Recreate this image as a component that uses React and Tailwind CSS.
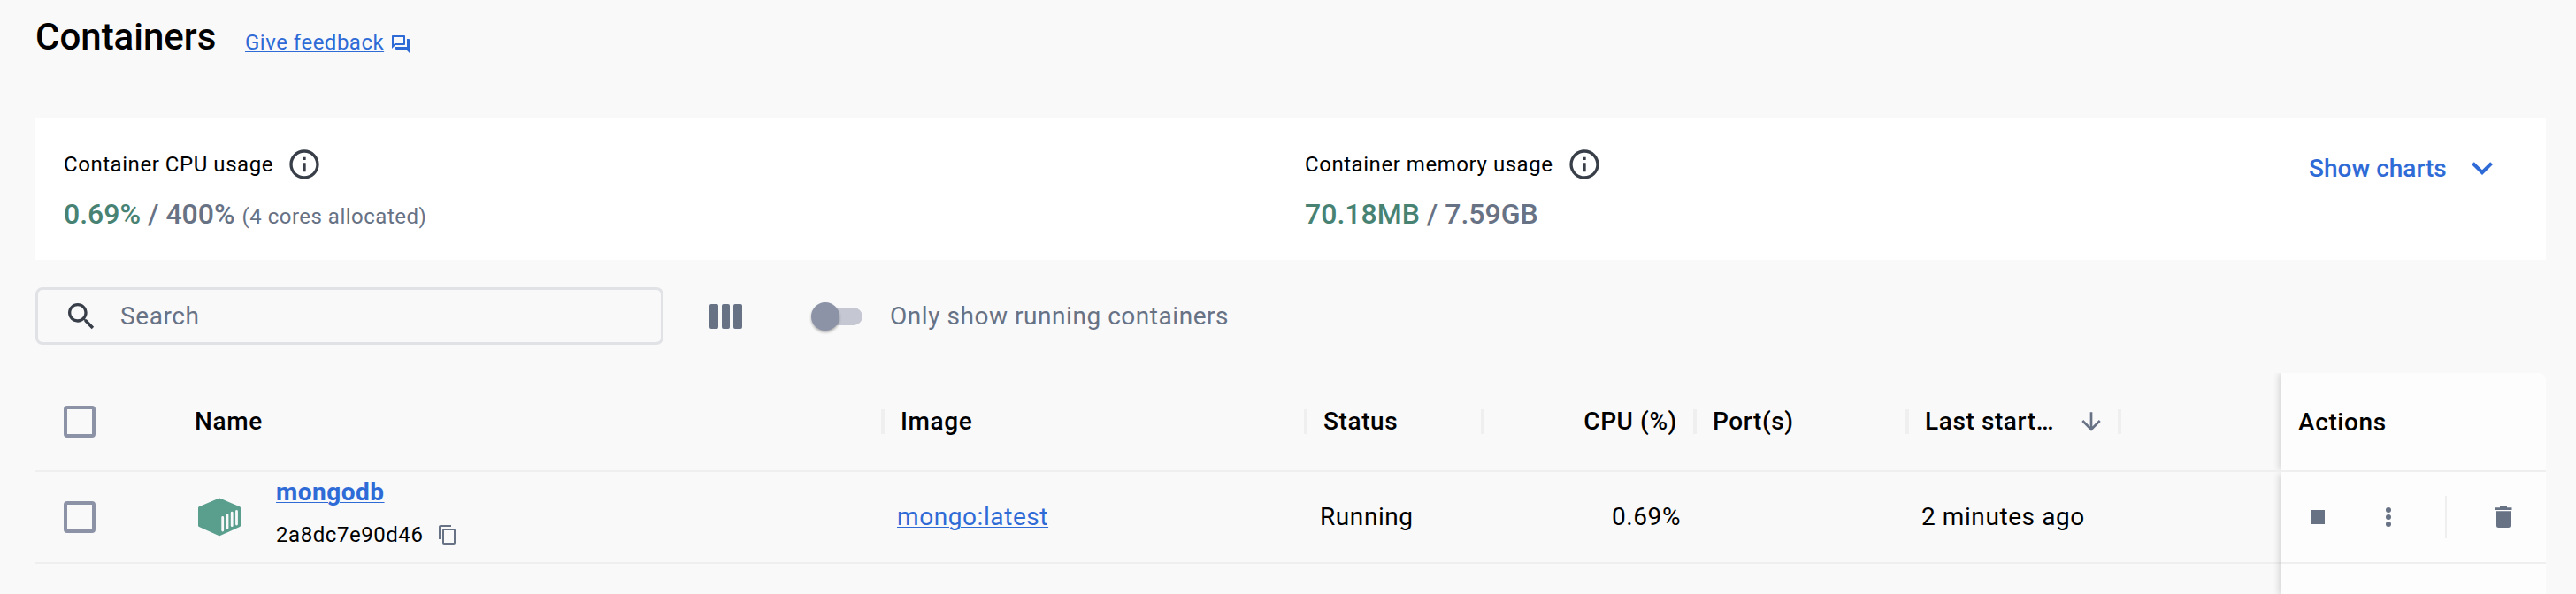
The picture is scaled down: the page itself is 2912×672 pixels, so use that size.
const Icon = ({ d, className }) => (
  <svg viewBox="0 0 24 24" fill="currentColor" className={className} aria-hidden="true">
    <path d={d} />
  </svg>
);

const paths = {
  forum:
    "M15 4v7H5.17L4 12.17V4h11m1-2H3c-.55 0-1 .45-1 1v14l4-4h10c.55 0 1-.45 1-1V3c0-.55-.45-1-1-1zm5 4h-2v9H6v2c0 .55.45 1 1 1h11l4 4V7c0-.55-.45-1-1-1z",
  info: "M11 7h2v2h-2zm0 4h2v6h-2zm1-9C6.48 2 2 6.48 2 12s4.48 10 10 10 10-4.48 10-10S17.52 2 12 2zm0 18c-4.41 0-8-3.59-8-8s3.59-8 8-8 8 3.59 8 8-3.59 8-8 8z",
  expand: "M16.59 8.59 12 13.17 7.41 8.59 6 10l6 6 6-6z",
  search:
    "M15.5 14h-.79l-.28-.27C15.41 12.59 16 11.11 16 9.5 16 5.91 13.09 3 9.5 3S3 5.91 3 9.5 5.91 16 9.5 16c1.61 0 3.09-.59 4.23-1.57l.27.28v.79l5 4.99L20.49 19l-4.99-5zm-6 0C7.01 14 5 11.99 5 9.5S7.01 5 9.5 5 14 7.01 14 9.5 11.99 14 9.5 14z",
  copy: "M16 1H4c-1.1 0-2 .9-2 2v14h2V3h12V1zm3 4H8c-1.1 0-2 .9-2 2v14c0 1.1.9 2 2 2h11c1.1 0 2-.9 2-2V7c0-1.1-.9-2-2-2zm0 16H8V7h11v14z",
  arrow: "m20 12-1.41-1.41L13 16.17V4h-2v12.17l-5.58-5.59L4 12l8 8 8-8z",
};

const Checkbox = () => (
  <span className="size-9 rounded-[4px] border-4 border-[#8c93a7]" role="checkbox" aria-checked="false" />
);

const Label = ({ children }) => (
  <div className="flex h-12 items-center gap-[15px]">
    <span className="text-[24px] leading-[36px] tracking-[0.55px]">{children}</span>
    <Icon d={paths.info} className="size-10 text-[#393f49]" />
  </div>
);

const HeadCell = ({ className, children }) => (
  <div className={`flex h-full shrink-0 items-center justify-between ${className}`}>
    {children}
    <span className="ml-auto h-7 w-1 shrink-0 bg-[#efeff0]" />
  </div>
);

const headText = "text-[28px] font-medium leading-[40px] tracking-[0.6px]";
const bodyText = "text-[28px] leading-[40px] tracking-[0.58px]";
const link = "text-[#2f6bd6] underline decoration-1 underline-offset-[2px]";

export default function App() {
  return (
    <main className="flex h-[672px] w-[2912px] flex-col overflow-hidden bg-[#f9f9fa] pl-10 font-['Roboto','Liberation_Sans',sans-serif] text-black">
      <header className="flex h-[134px] shrink-0 items-baseline pt-3">
        <h1 className="w-[237px] text-[42px] font-medium leading-[60px]">Containers</h1>
        <a className={`text-[24px] tracking-[0.5px] ${link}`}>Give feedback</a>
        <Icon d={paths.forum} className="ml-[7px] size-6 translate-y-[6px] text-[#2f6bd6]" />
      </header>

      <section className="flex h-40 w-[2838px] shrink-0 bg-white pl-8">
        <div className="w-[1403px] pt-7">
          <Label>Container CPU usage</Label>
          <p className="mt-[10px] flex items-baseline text-[32px] font-medium leading-[44px] text-[#677285]">
            <span className="text-[#478273]">0.69%</span>
            <span className="whitespace-pre"> / 400% </span>
            <span className="text-[24px] font-normal tracking-[0.5px]">(4 cores allocated)</span>
          </p>
        </div>
        <div className="w-[1135px] pt-7">
          <Label>Container memory usage</Label>
          <p className="mt-[10px] text-[32px] font-medium leading-[44px] text-[#677285]">
            <span className="text-[#478273]">70.18MB</span> / 7.59GB
          </p>
        </div>
        <div className="mt-8 flex h-12 items-center text-[#2f6bd6]">
          <span className="w-[172px] pt-[2px] text-[28px] font-medium leading-[40px]">Show charts</span>
          <Icon d={paths.expand} className="size-12" />
        </div>
      </section>

      <div className="flex h-32 shrink-0 items-center">
        <div className="-mt-px flex h-[65px] w-[710px] items-center rounded-[8px] border-[3px] border-[#e1e2e6] pl-[29px] pt-px">
          <Icon d={paths.search} className="size-10 text-[#393f49]" />
          <span className="ml-6 text-[28px] leading-[40px] tracking-[0.6px] text-[#677285]">Search</span>
        </div>
        <div className="ml-[52px] flex gap-1">
          <span className="h-7 w-[9.7px] rounded-[2px] bg-[#677285]" />
          <span className="h-7 w-[9.7px] rounded-[2px] bg-[#677285]" />
          <span className="h-7 w-[9.7px] rounded-[2px] bg-[#677285]" />
        </div>
        <div className="ml-[78px] flex w-[89px] items-center">
          <span className="z-10 size-8 rounded-full bg-[#8c93a7] shadow-[0_2px_3px_rgba(0,0,0,0.3)]" />
          <span className="-ml-[26px] h-5 w-[52px] rounded-full bg-[#c5c8d2]" />
        </div>
        <span className="text-[28px] leading-[40px] tracking-[0.54px] text-[#677285]">Only show running containers</span>
      </div>

      <div className="flex w-[2838px] flex-1">
        <div className="w-[2538px] shrink-0">
          <div className="flex h-[112px] items-center border-b-2 border-[#efeff0]">
            <div className="flex w-40 shrink-0 items-center pl-8">
              <Checkbox />
            </div>
            <HeadCell className="w-[800px] pl-5">
              <span className={headText}>Name</span>
            </HeadCell>
            <HeadCell className="w-[478px] pl-[18px]">
              <span className={headText}>Image</span>
            </HeadCell>
            <HeadCell className="w-[200px] pl-[18px]">
              <span className={headText}>Status</span>
            </HeadCell>
            <HeadCell className="w-[240px]">
              <span className={`w-[218px] text-right ${headText}`}>CPU (%)</span>
            </HeadCell>
            <HeadCell className="w-[240px] pl-[18px]">
              <span className={headText}>Port(s)</span>
            </HeadCell>
            <HeadCell className="w-[240px] pl-[18px]">
              <span className={`w-[154px] ${headText}`}>Last start…</span>
              <Icon d={paths.arrow} className="ml-[18px] size-8 text-[#677285]" />
            </HeadCell>
          </div>

          <div className="flex h-[104px] items-center border-b-2 border-[#efeff0]">
            <div className="flex w-[182px] shrink-0 items-center pl-8">
              <Checkbox />
            </div>
            <svg viewBox="0 0 52 48" className="h-12 w-[52px]" aria-hidden="true">
              <path
                d="M25.2 2.7a2 2 0 0 1 1.6 0L49 12.2a1.6 1.6 0 0 1 1 1.5V33.500a1.6 1.6 0 0 1-1 1.5L26.8 45a2 2 0 0 1-1.6 0L3 35a1.6 1.6 0 0 1-1-1.5V13.7a1.6 1.6 0 0 1 1-1.5z"
                fill="#5a9e8d"
              />
              <path
                d="M29.700 24.4v14.6M35 21.6v14.6M40.2 19.1v14.6M45.5 17.4v14.6"
                stroke="#f9f9fa"
                strokeWidth="2.8"
                strokeLinecap="round"
              />
            </svg>
            <div className="-mt-[10px] ml-[38px] w-[702px]">
              <div className="text-[28px] font-bold leading-[40px] tracking-[0.5px]">
                <a className={link}>mongodb</a>
              </div>
              <div className="mt-[10px] flex items-center text-[24px] leading-[36px] tracking-[0.55px]">
                2a8dc7e90d46
                <Icon d={paths.copy} className="ml-4 size-6 text-[#677285]" />
              </div>
            </div>
            <div className={`w-[478px] ${bodyText}`}>
              <a className={link}>mongo:latest</a>
            </div>
            <div className={`w-[200px] ${bodyText}`}>Running</div>
            <div className={`w-[208px] text-right ${bodyText}`}>0.69%</div>
            <div className={`ml-[272px] ${bodyText}`}>2 minutes ago</div>
          </div>
        </div>

        <div className="flex w-[300px] flex-col">
          <div className="h-[110px] shadow-[-1px_0_8px_rgba(0,0,0,0.18)] [clip-path:inset(0_0_0_-14px)]">
            <div className="flex h-full items-center rounded-tr-[8px] bg-[#fdfdfd] pl-5 pt-[1px]">
              <span className={headText}>Actions</span>
            </div>
          </div>
          <div className="h-[2px] bg-[#efeff0]" />
          <div className="flex-1 bg-[#fdfdfd] shadow-[-1px_2px_8px_rgba(0,0,0,0.18)] [clip-path:inset(0_0_0_-14px)]">
            <div className="flex h-[104px] items-center border-b-2 border-[#efeff0] pl-[34px]">
              <span className="size-4 bg-[#677285]" />
              <span className="ml-[69px] flex w-[6px] flex-col gap-[2px]">
                <span className="size-[6px] rounded-full bg-[#677285]" />
                <span className="size-[6px] rounded-full bg-[#677285]" />
                <span className="size-[6px] rounded-full bg-[#677285]" />
              </span>
              <span className="ml-[61px] h-12 w-[2px] bg-[#efeff0]" />
              <svg viewBox="0 0 20 24" className="ml-[54px] h-6 w-5" fill="#677285" aria-hidden="true">
                <path d="M6 0h8v1.3h5.5V4H.5V1.3H6zM2 5.3h16V21.500A2.5 2.5 0 0 1 15.5 24h-11A2.5 2.5 0 0 1 2 21.500z" />
              </svg>
            </div>
          </div>
        </div>
      </div>
    </main>
  );
}
